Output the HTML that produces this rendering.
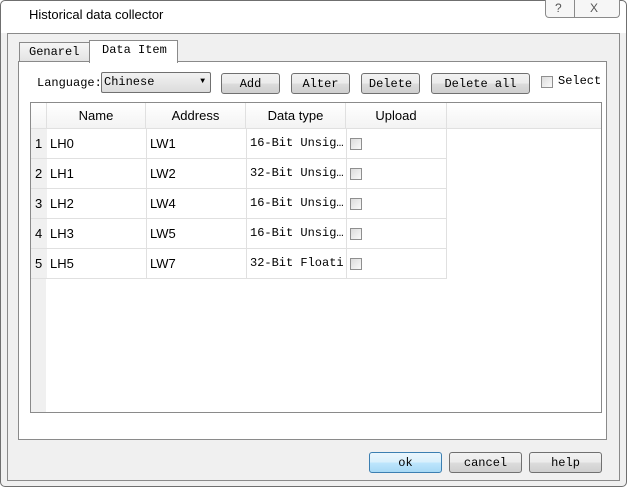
<!DOCTYPE html><html><head><style>
*{box-sizing:border-box;margin:0;padding:0}
body{width:627px;height:487px;background:#fff;font-family:"Liberation Sans",sans-serif;position:relative;overflow:hidden}
.abs{position:absolute}
.mono{font-family:"Liberation Mono",monospace;font-size:12px;color:#000}
.btn{position:absolute;border:1px solid #707070;border-radius:3px;background:linear-gradient(#f2f2f2,#ebebeb 50%,#dcdcdc 51%,#cfcfcf);text-align:center;font-family:"Liberation Mono",monospace;font-size:12px;line-height:20px}
.cb{position:absolute;width:12px;height:12px;border:1px solid #8f8f8f;background:linear-gradient(135deg,#dcdcdc,#fafafa)}
.cell{position:absolute;border-right:1px solid #e0e0e0;border-bottom:1px solid #e0e0e0;font-size:13px;line-height:29px;padding-left:4px}
</style></head><body>
<div class="abs" style="left:0;top:0;width:627px;height:487px;border:1px solid #6f6f6f;border-radius:5px;background:#f0f0f0"></div>
<div class="abs" style="left:1px;top:1px;width:625px;height:32px;background:#fff;border-radius:5px 5px 0 0"></div>
<div class="abs" style="left:29px;top:7px;font-size:13px;color:#000">Historical data collector</div>
<div class="abs" style="left:545px;top:0;width:75px;height:18px;border:1px solid #8a8a8a;border-top:none;border-radius:0 0 4px 4px;background:#f6f6f6"></div>
<div class="abs" style="left:574px;top:0;width:1px;height:18px;background:#8a8a8a"></div>
<div class="abs" style="left:555px;top:1px;font-size:12px;color:#555">?</div>
<div class="abs" style="left:590px;top:1px;font-size:12px;color:#555">X</div>
<div class="abs" style="left:7px;top:33px;width:613px;height:448px;border:1px solid #8a8a8a;background:#f0f0f0"></div>
<div class="abs mono" style="left:19px;top:42px;width:71px;height:20px;border:1px solid #8a8a8a;border-bottom:none;background:linear-gradient(#f6f6f6,#e2e2e2);padding:2px 0 0 9px">Genarel</div>
<div class="abs" style="left:18px;top:61px;width:589px;height:379px;border:1px solid #8a8a8a;background:#fff"></div>
<div class="abs mono" style="left:89px;top:40px;width:89px;height:23px;border:1px solid #8a8a8a;border-bottom:none;background:#fff;padding:2px 0 0 12px">Data Item</div>
<div class="abs mono" style="left:37px;top:76px">Language:</div>
<div class="abs mono" style="left:101px;top:72px;width:110px;height:21px;border:1px solid #707070;border-radius:2px;background:linear-gradient(#f2f2f2,#dcdcdc);padding:2px 0 0 2px">Chinese<span style="position:absolute;right:5px;top:5px;font-size:8px;line-height:8px">▼</span></div>
<div class="btn" style="left:221px;top:73px;width:59px;height:21px">Add</div>
<div class="btn" style="left:291px;top:73px;width:59px;height:21px">Alter</div>
<div class="btn" style="left:361px;top:73px;width:59px;height:21px">Delete</div>
<div class="btn" style="left:431px;top:73px;width:99px;height:21px">Delete all</div>
<div class="cb" style="left:541px;top:76px"></div>
<div class="abs mono" style="left:558px;top:74px">Select</div>
<div class="abs" style="left:30px;top:102px;width:572px;height:311px;border:1px solid #8a8a8a;background:#fff"></div>
<div class="abs" style="left:31px;top:103px;width:15px;height:309px;background:#f0f0f0"></div>
<div class="abs" style="left:31px;top:103px;width:570px;height:26px;background:linear-gradient(#fff,#f3f3f3);border-bottom:1px solid #e0e0e0"></div>
<div class="abs" style="left:46px;top:103px;width:100px;height:26px;border-right:1px solid #e0e0e0;border-left:1px solid #e0e0e0;text-align:center;font-size:13px;line-height:26px">Name</div>
<div class="abs" style="left:146px;top:103px;width:100px;height:26px;border-right:1px solid #e0e0e0;text-align:center;font-size:13px;line-height:26px">Address</div>
<div class="abs" style="left:246px;top:103px;width:100px;height:26px;border-right:1px solid #e0e0e0;text-align:center;font-size:13px;line-height:26px">Data type</div>
<div class="abs" style="left:346px;top:103px;width:101px;height:26px;border-right:1px solid #e0e0e0;text-align:center;font-size:13px;line-height:26px">Upload</div>
<div id="rows"></div>
<script>
var d=[["1","LH0","LW1","16-Bit Unsig…"],["2","LH1","LW2","32-Bit Unsig…"],["3","LH2","LW4","16-Bit Unsig…"],["4","LH3","LW5","16-Bit Unsig…"],["5","LH5","LW7","32-Bit Floati·"]];
var h="";d.forEach(function(r,i){var t=129+i*30;
h+='<div class="cell" style="left:31px;top:'+t+'px;width:16px;height:30px;background:#f0f0f0;border-right:none;padding-left:4px">'+r[0]+'</div>';
h+='<div class="cell" style="left:46px;top:'+t+'px;width:101px;height:30px">'+r[1]+'</div>';
h+='<div class="cell" style="left:146px;top:'+t+'px;width:101px;height:30px">'+r[2]+'</div>';
h+='<div class="cell mono" style="left:246px;top:'+t+'px;width:101px;height:30px;font-size:12px;padding-left:4px;white-space:nowrap;overflow:hidden">'+r[3]+'</div>';
h+='<div class="cell" style="left:346px;top:'+t+'px;width:101px;height:30px"></div>';
h+='<div class="cb" style="left:350px;top:'+(t+9)+'px"></div>';});
document.getElementById("rows").innerHTML=h;
</script>
<div class="btn" style="left:369px;top:452px;width:73px;height:21px;border-color:#3c7fb1;background:linear-gradient(#eaf6fd,#d9f0fc 50%,#bee6fd 51%,#a7d9f5)">ok</div>
<div class="btn" style="left:449px;top:452px;width:73px;height:21px">cancel</div>
<div class="btn" style="left:529px;top:452px;width:73px;height:21px">help</div>
</body></html>
